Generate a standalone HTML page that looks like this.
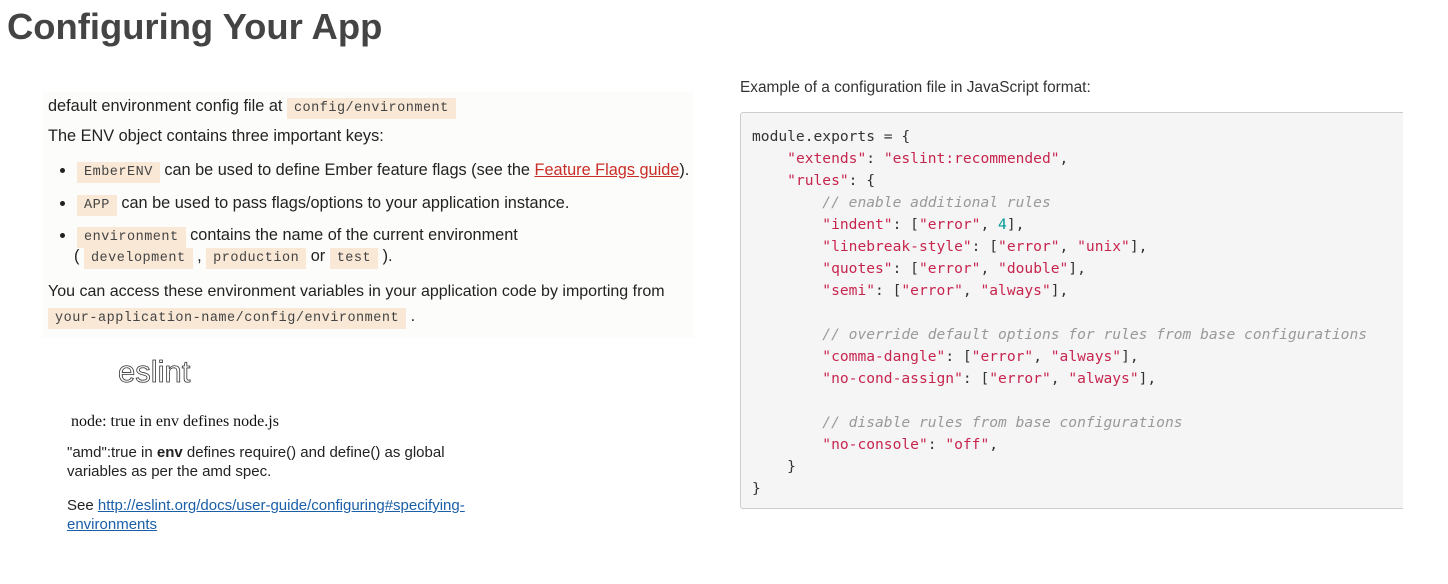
<!DOCTYPE html>
<html><head><meta charset="utf-8"><style>
body{margin:0;width:1448px;height:584px;background:#fff;position:relative;overflow:hidden;font-family:"Liberation Sans",sans-serif;color:#222}
.a{position:absolute;white-space:nowrap}
h1{position:absolute;left:7px;top:6px;margin:0;font-size:36.4px;font-weight:bold;color:#444}
.pan{position:absolute;left:42px;top:92px;width:652px;height:246px;background:#fcfcfa}
.t{font-size:16.3px;color:#222}
code{font-family:"Liberation Mono",monospace;font-size:13.5px;background:#f9e8d6;padding:3px 7px;color:#444;letter-spacing:0.5px}
.cb{position:absolute;left:740px;top:112px;width:663px;height:397px;background:#f5f5f5;border:1px solid #ccc;border-right:none;border-radius:3px 0 0 3px;box-sizing:border-box}
pre{position:absolute;left:752px;top:126px;margin:0;font-family:"DejaVu Sans Mono","Liberation Mono",monospace;font-size:14.6px;line-height:22px;color:#333}
.s{color:#c7254e}.c{color:#999;font-style:italic}.n{color:#099}
.dot{display:inline-block;width:5px;height:5px;border-radius:50%;background:#222;margin-right:12px;vertical-align:middle}
</style></head><body>
<h1>Configuring Your App</h1>
<div class="pan"></div>
<div class="a t" style="left:48px;top:97px">default environment config file at <code>config/environment</code></div>
<div class="a t" style="left:48px;top:127px">The ENV object contains three important keys:</div>
<div class="a t" style="left:60px;top:161px"><span class="dot"></span><code>EmberENV</code> can be used to define Ember feature flags (see the <span style="color:#c92d27;text-decoration:underline">Feature Flags guide</span>).</div>
<div class="a t" style="left:60px;top:194px"><span class="dot"></span><code>APP</code> can be used to pass flags/options to your application instance.</div>
<div class="a t" style="left:60px;top:226px"><span class="dot"></span><code>environment</code> contains the name of the current environment</div>
<div class="a t" style="left:74px;top:247px">( <code>development</code> , <code>production</code> or <code>test</code> ).</div>
<div class="a t" style="left:48px;top:283px;font-size:16px">You can access these environment variables in your application code by importing from</div>
<div class="a t" style="left:48px;top:307px"><code>your-application-name/config/environment</code> .</div>
<div class="a" style="left:118px;top:354px;font-size:31px;color:#fff;-webkit-text-stroke:0.8px #333">eslint</div>
<div class="a" style="left:71px;top:413px;font-family:'Liberation Serif',serif;font-size:16px;color:#111">node: true in env defines node.js</div>
<div class="a" style="left:67px;top:443px;font-size:15px;line-height:19px;color:#222;white-space:normal;width:420px">"amd":true in <b>env</b> defines require() and define() as global variables as per the amd spec.</div>
<div class="a" style="left:67px;top:496px;font-size:15px;line-height:19px;color:#222;white-space:normal;width:430px">See <span style="color:#1a5fa8;text-decoration:underline">http://eslint.org/docs/user-guide/configuring#specifying-environments</span></div>
<div class="a" style="left:740px;top:79px;font-size:15.4px;color:#333">Example of a configuration file in JavaScript format:</div>
<div class="cb"></div>
<pre>module.exports = {
    <span class="s">"extends"</span>: <span class="s">"eslint:recommended"</span>,
    <span class="s">"rules"</span>: {
        <span class="c">// enable additional rules</span>
        <span class="s">"indent"</span>: [<span class="s">"error"</span>, <span class="n">4</span>],
        <span class="s">"linebreak-style"</span>: [<span class="s">"error"</span>, <span class="s">"unix"</span>],
        <span class="s">"quotes"</span>: [<span class="s">"error"</span>, <span class="s">"double"</span>],
        <span class="s">"semi"</span>: [<span class="s">"error"</span>, <span class="s">"always"</span>],

        <span class="c">// override default options for rules from base configurations</span>
        <span class="s">"comma-dangle"</span>: [<span class="s">"error"</span>, <span class="s">"always"</span>],
        <span class="s">"no-cond-assign"</span>: [<span class="s">"error"</span>, <span class="s">"always"</span>],

        <span class="c">// disable rules from base configurations</span>
        <span class="s">"no-console"</span>: <span class="s">"off"</span>,
    }
}</pre>
</body></html>
